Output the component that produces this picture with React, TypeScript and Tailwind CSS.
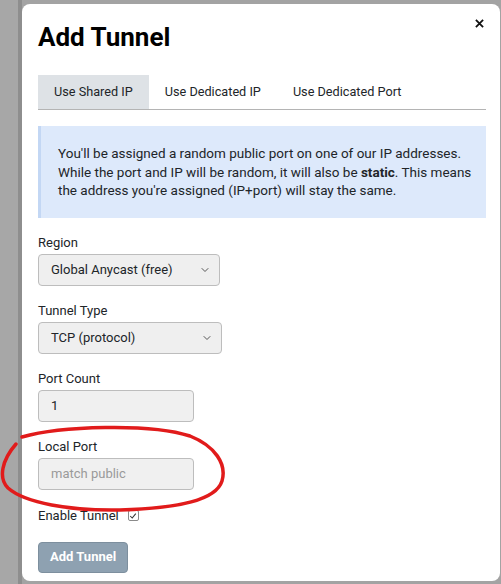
import { ChevronDown } from "lucide-react"

const font = { fontFamily: "Roboto, 'Liberation Sans', sans-serif" }

const Field: React.FC<{ label: string; className?: string; children: React.ReactNode }> = ({
  label,
  className,
  children,
}) => (
  <div className={className}>
    <div className="mb-[2px] text-[13px] leading-[18px] text-[#212529]">{label}</div>
    {children}
  </div>
)

const Select: React.FC<{ value: string; width: string }> = ({ value, width }) => (
  <div
    className={`${width} flex h-8 items-center justify-between rounded-[4px] border border-[#bdbdbd] bg-[#efefef] pl-3 pr-2 text-[13px] text-[#212529]`}
  >
    <span>{value}</span>
    <ChevronDown className="h-3 w-3 text-[#555]" strokeWidth={2} />
  </div>
)

export default function App() {
  return (
    <div
      className="relative flex h-[584px] w-[501px] overflow-hidden bg-[#a3a3a3]"
      style={font}
    >
      <div className="h-full w-[18px] bg-[#a7a7a7]" />
      <div className="h-full w-[4px] bg-[#8e8e8e]" />

      <div className="relative mt-[4px] h-[577px] w-[478px] shrink-0 rounded-lg bg-white pl-4 pr-[14px] pt-[17px]">
        <button className="absolute right-[15px] top-[13px] flex h-3 w-3 items-center justify-center">
          <svg viewBox="0 0 10 10" className="h-[9px] w-[9px]">
            <path d="M1 1 L9 9 M9 1 L1 9" stroke="#111" strokeWidth="2" />
          </svg>
        </button>

        <h1 className="text-[26px] font-bold leading-8 text-black">Add Tunnel</h1>

        <div className="mt-[22px] flex border-b border-[#b4b4b4] text-[12.7px] text-[#212529]">
          <div className="bg-[#dee2e6] px-4 leading-[34px]">Use Shared IP</div>
          <div className="px-4 leading-[34px]">Use Dedicated IP</div>
          <div className="px-4 leading-[34px]">Use Dedicated Port</div>
        </div>

        <div className="mt-4 whitespace-nowrap border-l-[3px] border-[#c3d7f4] bg-[#dde9fb] py-[18px] pl-[17px] text-[13.5px] leading-[18.5px] text-[#212529]">
          <div>You'll be assigned a random public port on one of our IP addresses.</div>
          <div>
            While the port and IP will be random, it will also be <b>static</b>. This means
          </div>
          <div>the address you're assigned (IP+port) will stay the same.</div>
        </div>

        <Field label="Region" className="mt-4">
          <Select value="Global Anycast (free)" width="w-[182px]" />
        </Field>

        <Field label="Tunnel Type" className="mt-4">
          <Select value="TCP (protocol)" width="w-[184px]" />
        </Field>

        <Field label="Port Count" className="mt-4">
          <div className="flex h-8 w-[156px] items-center rounded-[4px] border border-[#bdbdbd] bg-[#f0f0f0] px-3 text-[13px] text-[#212529]">
            1
          </div>
        </Field>

        <Field label="Local Port" className="mt-4">
          <div className="flex h-8 w-[156px] items-center rounded-[4px] border border-[#bdbdbd] bg-[#f0f0f0] px-3 text-[13px] text-[#9a9a9a]">
            match public
          </div>
        </Field>

        <div className="mt-4 flex items-center gap-[9px] text-[13px] leading-5 text-[#212529]">
          <span>Enable Tunnel</span>
          <span className="flex h-[11px] w-[11px] items-center justify-center rounded-[2px] border border-[#8a8a8a] bg-white">
            <svg viewBox="0 0 10 10" className="h-[8px] w-[8px]">
              <path d="M1.5 5 L4 7.5 L8.5 2" fill="none" stroke="#333" strokeWidth="1.3" />
            </svg>
          </span>
        </div>

        <button className="mt-4 h-[31px] rounded-[4px] border border-[#7d8f9e] bg-[#8ea1b1] px-[11px] text-[13px] font-bold text-white">
          Add Tunnel
        </button>
      </div>

      <svg
        className="pointer-events-none absolute left-0 top-0"
        width="501"
        height="584"
        viewBox="0 0 501 584"
      >
        <path
          d="M22 437 C60 426 150 423 190 436 C215 446 227 464 222 481 C216 500 180 508 120 510 C70 511 25 503 8 488 C-2 478 2 460 16 444"
          fill="none"
          stroke="#e11b1b"
          strokeWidth="3.5"
          strokeLinecap="round"
        />
      </svg>
    </div>
  )
}
